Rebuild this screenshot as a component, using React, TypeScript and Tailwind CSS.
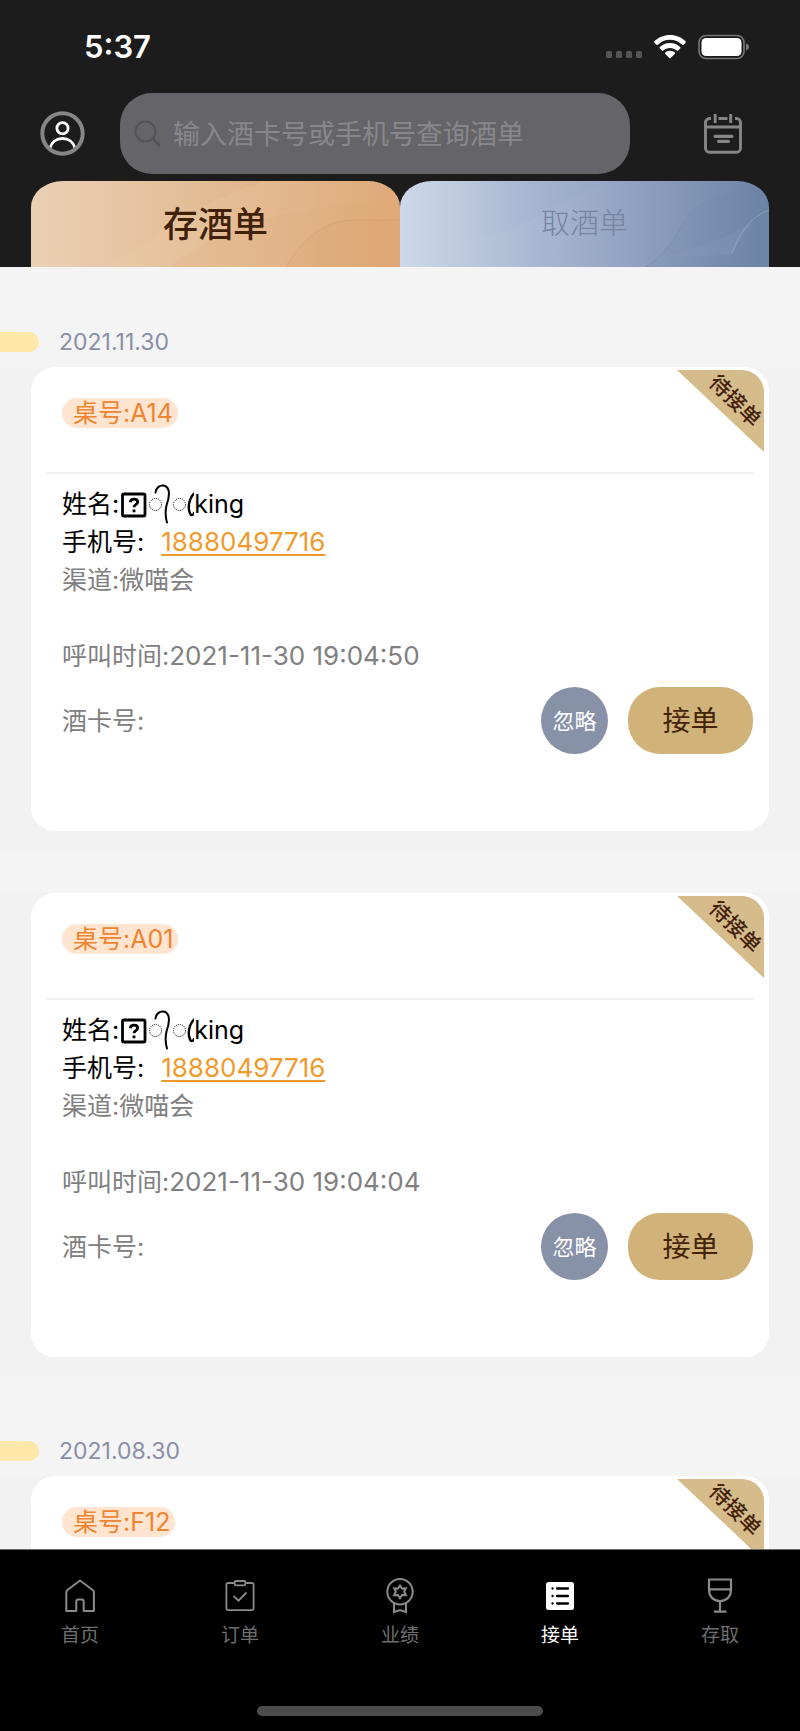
import React from "react";
import { clsx } from "clsx";

type Order = {
	id: number;
	table: string;
	details?: { phone: string; channel: string; calledAt: string };
};

const groups: { date: string; orders: Order[] }[] = [
	{
		date: "2021.11.30",
		orders: [
			{
				id: 1,
				table: "A14",
				details: { phone: "18880497716", channel: "微喵会", calledAt: "2021-11-30 19:04:50" },
			},
			{
				id: 2,
				table: "A01",
				details: { phone: "18880497716", channel: "微喵会", calledAt: "2021-11-30 19:04:04" },
			},
		],
	},
	{
		date: "2021.08.30",
		orders: [{ id: 3, table: "F12" }],
	},
];

const StatusBar = () => (
	<div className="flex h-[93px] items-center justify-between pl-[84px] pr-[51px] text-white">
		<span className="text-[31px] font-semibold leading-8">5:37</span>
		<div className="flex items-center gap-3">
			<Icon.signal />
			<Icon.wifi />
			<Icon.battery />
		</div>
	</div>
);

const SearchRow = () => (
	<div className="flex items-center pl-10 pr-[58px]">
		<button type="button" aria-label="我的">
			<Icon.user />
		</button>
		<label className="ml-[35px] flex h-[81px] flex-1 items-center gap-3 rounded-[32px] bg-[#656469] pl-[14px] pr-4">
			<Icon.search />
			<input
				type="search"
				aria-label="查询酒单"
				placeholder="输入酒卡号或手机号查询酒单"
				className="w-full min-w-0 bg-transparent pt-1 text-[27px] text-white outline-none placeholder:text-[#88888c]"
			/>
		</label>
		<button type="button" aria-label="日期" className="ml-[74px]">
			<Icon.calendar />
		</button>
	</div>
);

const Tabs = () => (
	<div className="mt-[7px] grid grid-cols-2 px-[31px]">
		<button
			type="button"
			className="relative h-[86px] overflow-hidden bg-linear-to-r from-[#ebd0b4] via-[#e2bb93] to-[#dc9f6d] [border-radius:32px_32px_0_0/26px_26px_0_0]"
		>
			<Icon.warmWaves />
			<span className="relative text-[35px] font-medium text-[#42210b]">存酒单</span>
		</button>
		<button
			type="button"
			className="relative h-[86px] overflow-hidden bg-linear-to-r from-[#cdd8ea] via-[#9dadc9] to-[#6c83a6] [border-radius:32px_32px_0_0/26px_26px_0_0]"
		>
			<Icon.coolWaves />
			<span className="relative text-[29px] font-light text-[#7584a1]">取酒单</span>
		</button>
	</div>
);

const Ribbon = () => (
	<div className="absolute right-[5px] top-[3px] h-[82px] w-[87px] rounded-tr-[22px] bg-[#d6bb8b] [clip-path:polygon(0_0,100%_0,100%_100%)]">
		<span className="absolute left-[58px] top-[31px] -translate-x-1/2 -translate-y-1/2 rotate-45 whitespace-nowrap text-[21px] font-medium leading-6 text-[#42210b]">
			待接单
		</span>
	</div>
);

const OrderCard = ({ order }: { order: Order }) => (
	<div className="bg-[#f2f2f2] px-[31px] pb-5">
		<article className="relative min-h-[464px] rounded-3xl bg-white px-4 text-[25px] leading-[38px]">
			<Ribbon />
			<div className="flex h-[107px] items-start border-b-2 border-[#f0f0f0] pl-[15px] pt-[31px]">
				<span className="rounded-full bg-[#ffe4d0] pl-[11px] pr-[5px] leading-[30px] text-[#ee8530]">
					桌号:{order.table}
				</span>
			</div>
			{order.details && (
				<>
					<div className="pl-[15px] pt-[11px] text-black">
						<p className="flex items-center">
							<span className="mr-0.5">姓名:</span>
							<Icon.nameGlyphs />
							king
						</p>
						<p className="flex items-center">
							手机号:
							<a
								href={`tel:${order.details.phone}`}
								className="ml-[17px] text-[26px] text-[#ee9a2c] underline decoration-2 underline-offset-3"
							>
								{order.details.phone}
							</a>
						</p>
						<p className="text-[#808080]">渠道:{order.details.channel}</p>
						<p className="mt-[38px] text-[#808080]">
							呼叫时间:<span className="text-[26px]">{order.details.calledAt}</span>
						</p>
					</div>
					<div className="mt-3 flex items-center pl-[15px]">
						<p className="flex-1 text-[#808080]">酒卡号:</p>
						<button type="button" className="size-[67px] rounded-full bg-[#8792a8] text-[22px] text-white">
							忽略
						</button>
						<button
							type="button"
							className="ml-5 h-[67px] w-[125px] rounded-[32px] bg-[#d1b278] text-[28px] text-[#43240b]"
						>
							接单
						</button>
					</div>
				</>
			)}
		</article>
	</div>
);

const TabBar = () => {
	const items = [
		{ label: "首页", icon: <Icon.home /> },
		{ label: "订单", icon: <Icon.clipboard /> },
		{ label: "业绩", icon: <Icon.medal /> },
		{ label: "接单", icon: <Icon.list />, active: true },
		{ label: "存取", icon: <Icon.glass /> },
	];

	return (
		<footer className="flex flex-col items-center border-t border-[#6b6b6b] bg-black pb-[15px]">
			<nav className="grid w-full grid-cols-5">
				{items.map((item) => (
					<a
						key={item.label}
						href="#"
						className={clsx(
							"flex flex-col items-center pt-[26px] text-[19px] leading-7",
							item.active ? "text-white" : "text-[#6f6f6f]"
						)}
					>
						{item.icon}
						<span className="mt-[6px]">{item.label}</span>
					</a>
				))}
			</nav>
			<div className="mt-[56px] h-[10px] w-[286px] rounded-full bg-[#4c4c4c]" />
		</footer>
	);
};

export default function App() {
	return (
		<div className="flex h-screen flex-col bg-[#f4f4f4] font-['Inter','Noto_Sans_CJK_SC',sans-serif]" lang="zh-CN">
			<header className="bg-[#1c1c1c]">
				<StatusBar />
				<SearchRow />
				<Tabs />
			</header>
			<main className="flex min-h-0 flex-1 flex-col gap-[49px] overflow-y-auto pt-[50px] [scrollbar-width:none]">
				{groups.map((group) => (
					<section key={group.date}>
						<h2 className="flex h-[50px] items-center gap-5 text-[23px] text-[#8a8fa6]">
							<span className="h-5 w-[39px] rounded-r-[10px] bg-[#fde7a9]" />
							{group.date}
						</h2>
						<div className="flex flex-col gap-[42px]">
							{group.orders.map((order) => (
								<OrderCard key={order.id} order={order} />
							))}
						</div>
					</section>
				))}
			</main>
			<TabBar />
		</div>
	);
}

const Icon = {
	signal: () => (
		<svg width="37" height="26" viewBox="0 0 37 26" fill="#555">
			<rect x="1" y="17" width="6" height="7" rx="1.5" />
			<rect x="11" y="17" width="6" height="7" rx="1.5" />
			<rect x="21" y="17" width="6" height="7" rx="1.5" />
			<rect x="31" y="17" width="6" height="7" rx="1.5" />
		</svg>
	),
	wifi: () => (
		<svg width="32" height="26" viewBox="0 0 32 26" fill="#fff">
			<path d="M16 1C9.800 1 4.200 3.400.4 7.300c-.4.4-.4 1 0 1.400l2.100 2.100c.4.400.9.400 1.300 0C7 7.700 11.300 5.800 16 5.800s9 1.900 12.200 5c.4.400.9.400 1.300 0l2.100-2.100c.4-.4.4-1 0-1.400C27.800 3.400 22.200 1 16 1z" />
			<path d="M16 9c-4 0-7.600 1.600-10.200 4.100-.4.400-.4 1 0 1.400L8 16.600c.4.400.9.400 1.300 0 1.800-1.700 4.100-2.700 6.700-2.700s4.900 1 6.700 2.700c.4.400.9.400 1.300 0l2.200-2.100c.4-.4.4-1 0-1.400C23.600 10.600 20 9 16 9z" />
			<path d="M16 16.800c-1.900 0-3.600.7-4.800 1.800-.4.400-.4.900 0 1.300l4.200 4.200c.3.300.9.300 1.200 0l4.200-4.200c.4-.4.4-.9 0-1.300-1.200-1.100-2.900-1.800-4.800-1.800z" />
		</svg>
	),
	battery: () => (
		<svg width="51" height="26" viewBox="0 0 51 26" fill="none">
			<rect x="1" y="1.500" width="45" height="23" rx="7" stroke="#777" strokeWidth="1.600" />
			<rect x="3.500" y="4" width="40" height="18" rx="4.500" fill="#fff" />
			<path d="M48 9.500c2 .6 3 1.900 3 3.500s-1 2.900-3 3.500z" fill="#777" />
		</svg>
	),
	user: () => (
		<svg width="45" height="45" viewBox="0 0 45 45" fill="none">
			<circle cx="22.500" cy="17.300" r="5.600" stroke="#fff" strokeWidth="2.800" />
			<path d="M10 37c1.500-5.800 6.500-9.500 12.500-9.500S33.500 31.200 35 37" stroke="#fff" strokeWidth="2.900" />
			<circle cx="22.500" cy="22.500" r="20.200" stroke="#868686" strokeWidth="4" />
		</svg>
	),
	search: () => (
		<svg className="shrink-0" width="27" height="27" viewBox="0 0 27 27" fill="none" stroke="#535358">
			<circle cx="11.500" cy="11.500" r="10" strokeWidth="2" />
			<path d="M19 19l6 6" strokeWidth="3" strokeLinecap="round" />
		</svg>
	),
	calendar: () => (
		<svg width="38" height="40" viewBox="0 0 38 40" fill="none" stroke="#868686" strokeWidth="2.900">
			<path d="M7 4.500H5.500a4 4 0 0 0-4 4v25.700a4 4 0 0 0 4 4h27a4 4 0 0 0 4-4V8.500a4 4 0 0 0-4-4H31M14.500 4.500h9" />
			<path d="M11.200 0v9M26.700 0v9M1.500 13h35" />
			<path d="M11 22.300h17M14.500 27.300h10" strokeWidth="3.200" strokeLinecap="round" />
		</svg>
	),
	warmWaves: () => (
		<svg className="absolute inset-0 size-full" viewBox="0 0 369 86" preserveAspectRatio="none" fill="none">
			<path d="M78 86C130 50 175 18 235 0h134v86z" fill="#f0d0aa" opacity=".2" />
			<path d="M138 86c50-38 110-62 231-66v66z" fill="#dea577" opacity=".16" />
			<path d="M255 86c18-31 40-47 70-47h44v47z" fill="#db9c6a" opacity=".15" />
			<path d="M255 86c18-31 40-47 70-47h44" stroke="#cf9869" opacity=".4" />
		</svg>
	),
	coolWaves: () => (
		<svg className="absolute inset-0 size-full" viewBox="0 0 369 86" preserveAspectRatio="none" fill="none">
			<path d="M60 0h148C175 14 140 38 108 49 92 54 76 58 60 60z" fill="url(#coolFade)" />
			<path d="M245 86c20-12 28-26 36-41 6-12 14-20 25-25 20-8 40-12 63-14v80z" fill="#6880a5" opacity=".12" />
			<path d="M265 76c40-12 75-24 103-45-17 9-27 25-36 43" fill="#8ea4c3" opacity=".18" />
			<path d="M332 72c7-18 17-36 37-43" stroke="#a9bbd5" opacity=".5" />
			<path d="M245 86c20-12 28-26 36-41" stroke="#6f88ae" opacity=".5" />
			<defs>
				<linearGradient id="coolFade">
					<stop stopColor="#8fa5c4" stopOpacity="0" />
					<stop offset="1" stopColor="#8fa5c4" stopOpacity=".3" />
				</linearGradient>
			</defs>
		</svg>
	),
	// unsupported symbol box followed by stray combining marks on dotted circles
	nameGlyphs: () => (
		<svg className="-my-0.5" width="73" height="42" viewBox="0 0 73 42" fill="none" stroke="#000">
			<rect x="1.500" y="11" width="22.500" height="22" rx="1.500" strokeWidth="2.800" />
			<path d="M9.300 19.200c.3-2 1.700-3 3.700-3 2.200 0 3.700 1.100 3.700 2.900 0 2.600-3.700 2.600-3.700 5.100M13 26.500v2.800" strokeWidth="2.800" />
			<circle cx="34.500" cy="21.500" r="6" strokeWidth="1" strokeDasharray="1 1" />
			<path d="M34.500 9.500c.5-4.500 4-7.500 8-7 8 1.500 5.500 13 3 20-1.200 5-1.200 11 .5 17" strokeWidth="2" strokeLinecap="round" />
			<circle cx="58.500" cy="21.500" r="6" strokeWidth="1" strokeDasharray="1 1" />
			<path d="M73 10.500c-5 5-6.500 14-4 20 1 2.500 3.500 1.500 4-.5" strokeWidth="2.400" strokeLinecap="round" />
		</svg>
	),
	home: () => (
		<svg width="40" height="40" viewBox="0 0 40 40" fill="none" stroke="#8a8a8a" strokeWidth="2" strokeLinejoin="round">
			<path d="M20 4.500L7.500 14c-.8.600-1.200 1.300-1.200 2.300V35h10V25.500c0-1.300.7-2 2-2h3.400c1.300 0 2 .7 2 2V35h10.200V16.300c0-1-.4-1.700-1.200-2.300z" />
		</svg>
	),
	clipboard: () => (
		<svg width="40" height="40" viewBox="0 0 40 40" fill="none" stroke="#8a8a8a" strokeWidth="1.800">
			<path d="M14.500 7H8.200c-1.200 0-1.800.6-1.800 1.800v23.500c0 1.200.6 1.800 1.800 1.800h23.600c1.200 0 1.800-.6 1.800-1.800V8.800c0-1.200-.6-1.800-1.800-1.800h-6.300" />
			<rect x="14.500" y="5" width="11" height="4.300" rx="1.500" />
			<path d="M13.500 20l5 4.700 8-8.200" />
		</svg>
	),
	medal: () => (
		<svg width="40" height="40" viewBox="0 0 40 40" fill="none" stroke="#8a8a8a" strokeWidth="2">
			<circle cx="20" cy="15.700" r="12.700" />
			<path d="M20 9.500l2.100 3.100 3.700-.2L24.200 15.800l1.600 3.400-3.700-.2L20 22.100 17.900 19l-3.700.2 1.600-3.400-1.600-3.400 3.700.2z" />
			<path d="M14 27v9l6-2 6 2v-9" />
		</svg>
	),
	list: () => (
		<svg width="40" height="40" viewBox="0 0 40 40" fill="none">
			<rect x="6" y="6" width="28" height="28" rx="2.500" fill="#fff" />
			<path d="M17 12.500h11M17 20h11M17 27.500h11M12.500 12.500h.1M12.500 20h.1M12.500 27.500h.1" stroke="#000" strokeWidth="2.300" strokeLinecap="round" />
		</svg>
	),
	glass: () => (
		<svg width="40" height="40" viewBox="0 0 40 40" fill="none" stroke="#8a8a8a" strokeWidth="2.200">
			<path d="M9 3.500h22v10.500c0 6.300-4.500 11-11 11s-11-4.700-11-11zM9 13.300h22M20 25v10.700M14 35.700h12.500" />
		</svg>
	),
};
